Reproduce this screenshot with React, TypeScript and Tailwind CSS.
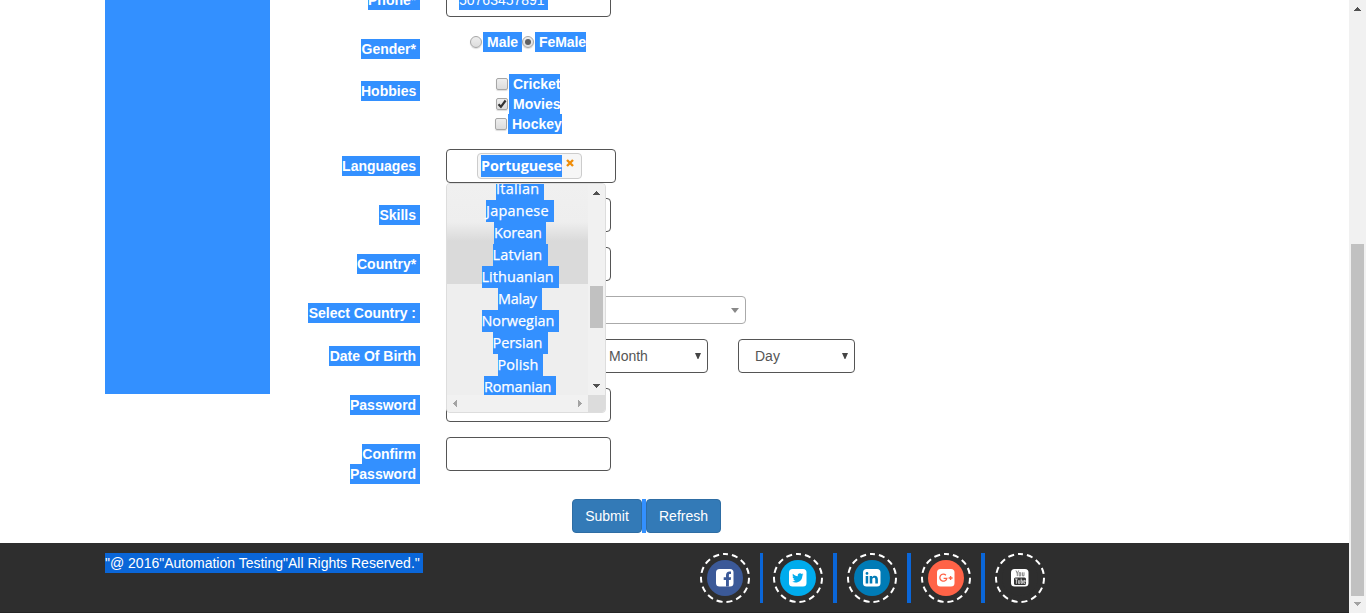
import React from "react";

const sel = "bg-[#3390ff] text-white";

function Row({ label, w, h, children }: { label: string; w: string; h: string; children?: React.ReactNode }) {
  return (
    <div className={`flex shrink-0 items-start ${h}`}>
      <div className="mr-[26px] flex w-[150px] justify-end pt-[7px]">
        <div className={`pr-1 text-right font-bold ${sel} ${w} whitespace-nowrap`}>{label}</div>
      </div>
      {children}
    </div>
  );
}

function Field({ className = "w-[165px]", children }: { className?: string; children?: React.ReactNode }) {
  return <div className={`h-[34px] shrink-0 rounded-[4px] border border-[#555] bg-white ${className}`}>{children}</div>;
}

function Radio({ on = false }: { on?: boolean }) {
  return (
    <span className="mt-1 flex h-3 w-3 shrink-0 items-center justify-center rounded-full border border-[#a6a6a6] bg-gradient-to-b from-[#eee] to-[#dcdcdc] shadow-[0_1px_1px_#ddd]">
      {on && <span className="h-[6px] w-[6px] rounded-full bg-[#606060]" />}
    </span>
  );
}

function Check({ on = false }: { on?: boolean }) {
  return (
    <span className="flex h-3 w-3 shrink-0 items-center justify-center rounded-[2px] border border-[#a6a6a6] bg-gradient-to-b from-[#eee] to-[#dcdcdc] shadow-[0_1px_1px_#ddd]">
      {on && (
        <svg width="10" height="10" viewBox="0 0 10 10">
          <path d="M1.5 5.3 3.9 7.8 8.6 1.5" fill="none" stroke="#333" strokeWidth="2.2" />
        </svg>
      )}
    </span>
  );
}

const languages = [
  ["Italian", "w-[48px]", "tracking-[0.3px]"],
  ["Japanese", "w-[68px]", "tracking-[0.3px]"],
  ["Korean", "w-[52px]", "tracking-[-0.1px]"],
  ["Latvian", "w-[55px]", "tracking-[0.2px]"],
  ["Lithuanian", "w-[77px]", "tracking-[0.1px]"],
  ["Malay", "w-[44px]", "tracking-[-0.2px]"],
  ["Norwegian", "w-[77px]", "tracking-[0px]"],
  ["Persian", "w-[55px]", "tracking-[0px]"],
  ["Polish", "w-[45px]", "tracking-[0.1px]"],
  ["Romanian", "w-[72px]", "tracking-[-0.1px]"],
];

function Dropdown() {
  return (
    <div className="absolute left-0 top-[34px] z-10 flex h-[230px] w-[160px] flex-col overflow-hidden rounded-[4px] border border-[#ddd] bg-[#eee]">
      <div className="flex h-[211px]">
        <div className="h-[211px] w-[141px] overflow-hidden bg-[linear-gradient(#f0f0f0_0px,#eee_38px,#dadada_57px,#dadada_100px,#eee_100px)]">
          <div className="-mt-[6px] flex flex-col items-center pl-[5px]">
            {languages.map(([name, w, tracking]) => (
              <div
                key={name}
                className={`h-[22px] shrink-0 whitespace-nowrap font-['Open_Sans','Noto_Sans',sans-serif] text-[14.4px] font-medium leading-[22px] [-webkit-text-stroke:0.25px_white] ${sel} ${w} ${tracking}`}
              >
                {name}
              </div>
            ))}
          </div>
        </div>
        <div className="flex w-[17px] flex-col items-center bg-[#f1f1f1]">
          <svg className="mt-[7px]" width="7" height="4" shapeRendering="crispEdges">
            <path d="M0 4 3.5 0 7 4z" fill="#505050" />
          </svg>
          <div className="mt-[91px] h-[42px] w-[13px] bg-[#c1c1c1]" />
          <svg className="mt-[56px]" width="7" height="4" shapeRendering="crispEdges">
            <path d="M0 0 3.5 4 7 0z" fill="#505050" />
          </svg>
        </div>
      </div>
      <div className="flex h-[17px] items-center bg-[#f1f1f1]">
        <svg className="ml-[6px]" width="4" height="7" shapeRendering="crispEdges">
          <path d="M4 0 0 3.5 4 7z" fill="#a3a3a3" />
        </svg>
        <svg className="ml-[121px]" width="4" height="7" shapeRendering="crispEdges">
          <path d="M0 0 4 3.5 0 7z" fill="#a3a3a3" />
        </svg>
        <div className="ml-auto h-[17px] w-[17px] bg-[#dcdcdc]" />
      </div>
    </div>
  );
}

function Caret() {
  return (
    <svg width="6" height="6" viewBox="0 0 6 6">
      <path d="M0 0h6L3.4 6h-.8z" fill="#444" />
    </svg>
  );
}

function Social({ bg, children }: { bg: string; children: React.ReactNode }) {
  return (
    <svg width="50" height="50" viewBox="0 0 50 50" className="shrink-0">
      <circle cx="25" cy="25" r="24" fill="none" stroke="#fff" strokeWidth="2" strokeDasharray="6.05 4.003" strokeDashoffset="3" transform="rotate(-90 25 25)" />
      <circle cx="25" cy="25" r="18" fill={bg} />
      {children}
    </svg>
  );
}

const Bar = ({ className }: { className: string }) => <div className={`h-[50px] shrink-0 bg-[#0a66d8] ${className}`} />;

const Plate = () => <rect x="16" y="16" width="17.5" height="17.5" rx="3.5" fill="#fff" />;

function Footer() {
  return (
    <footer className="flex h-[70px] shrink-0 items-start border-b border-[#242424] bg-[#2e2e2e] pl-[105px] pt-[10px]">
      <div className="h-5 w-[318px] whitespace-nowrap bg-[#0a66d8] text-white">"@ 2016"Automation Testing"All Rights Reserved."</div>
      <div className="ml-[277px] flex">
        <Social bg="#3b5998">
          <Plate />
          <path d="M26 33.5v-6.5h-2.3v-2.8H26v-2c0-2.5 1.4-3.8 3.6-3.8h1.4v2.7h-.9c-1.1 0-1.2.5-1.2 1.4v1.7h2.2l-.4 2.8h-1.8v6.5z" fill="#3b5998" />
        </Social>
        <Bar className="ml-[10px] mr-[10px] w-[3px]" />
        <Social bg="#00aced">
          <Plate />
          <g transform="translate(25 25) scale(.86) translate(-25.2 -25)">
            <path d="M31.6 20.8c-.5.2-1 .4-1.5.4.5-.3.9-.8 1.1-1.4-.5.3-1.1.5-1.7.6a2.7 2.7 0 0 0-4.6 2.5c-2.2-.1-4.2-1.2-5.6-2.8-.7 1.3-.3 2.8.9 3.6-.5 0-.9-.1-1.3-.3 0 1.3.9 2.4 2.2 2.7-.4.1-.8.1-1.2 0 .3 1.1 1.3 1.9 2.5 1.9a5.5 5.5 0 0 1-4 1.1c4.9 3.1 12-.2 11.9-7 .5-.3 1-.8 1.3-1.3z" fill="#00aced" />
          </g>
        </Social>
        <Bar className="ml-[10px] mr-[10px] w-[4px]" />
        <Social bg="#007bb6">
          <Plate />
          <path d="M18.7 23h2.5v7.6h-2.5zM18.6 20.4a1.4 1.3 0 1 0 2.8 0 1.4 1.3 0 1 0-2.8 0M22.7 23h2.4v1.2c.4-.7 1.3-1.4 2.6-1.4 2.2 0 3.2 1.5 3.2 3.7v4.1h-2.6v-3.9c0-1.3-.4-1.9-1.3-1.9-1.1 0-1.7.8-1.7 1.9v3.9h-2.6z" fill="#007bb6" />
        </Social>
        <Bar className="ml-[10px] mr-[10px] w-[4px]" />
        <Social bg="#ff6347">
          <Plate />
          <path d="M24.9 22.3a3.5 3.5 0 1 0 .9 3h-3.2M27.6 25h4M29.6 23v4" fill="none" stroke="#ff6347" strokeWidth="1.3" />
        </Social>
        <Bar className="ml-[10px] mr-[10px] w-[4px]" />
        <Social bg="#2e2e2e">
          <Plate />
          <path d="m21 17.5 1.3 3.1v2.5m1.4-5.6-1.4 3.1M24.2 19.7h1.5v3.2h-1.5zM27.4 19.3v3.5h1.6v-3.5" fill="none" stroke="#777" strokeWidth=".9" />
          <rect x="19" y="24.5" width="12" height="7.5" rx="1.5" fill="#343434" />
          <path d="M20 26h2.7m-1.3 0v4.8M23.4 27.2v3.2h1.4v-3.2m1.4-1.7v4.9h1.2v-2.7h-1.2m4.1 2.7h-1.5v-3h1.4v1.5h-1.4" fill="none" stroke="#eee" strokeWidth=".8" />
        </Social>
      </div>
    </footer>
  );
}

export default function App() {
  return (
    <div className="flex h-[613px] w-[1366px] overflow-hidden bg-white font-['Liberation_Sans',Arial,sans-serif] text-[14px] leading-[20px]">
      <div className="flex w-[1349px] flex-col">
        <div className="flex h-[543px]">
          <aside className="ml-[105px] h-[394px] w-[165px] bg-[#3390ff]" />
          <main className="-mt-[17px] flex w-[650px] flex-col">
            <Row label="Phone*" w="w-[52px]" h="h-[49px]">
              <Field>
                <div className={`ml-3 mt-[6px] w-[89px] ${sel}`}>50763457891</div>
              </Field>
            </Row>
            <Row label="Gender*" w="w-[59px]" h="h-[42px]">
              <div className="ml-[24px] flex font-bold">
                <Radio />
                <span className={`ml-px w-[39px] pl-1 ${sel}`}>Male</span>
                <Radio on />
                <span className={`ml-px w-[51px] whitespace-nowrap pl-1 tracking-[-0.1px] ${sel}`}>FeMale</span>
              </div>
            </Row>
            <Row label="Hobbies" w="w-[59px]" h="h-[75px]">
              <div className="ml-[49px] flex flex-col font-bold">
                <div className="flex items-center gap-px pl-px">
                  <Check />
                  <span className={`w-[51px] pl-1 ${sel}`}>Cricket</span>
                </div>
                <div className="flex items-center gap-px pl-px">
                  <Check on />
                  <span className={`w-[51px] pl-1 ${sel}`}>Movies</span>
                </div>
                <div className="flex items-center gap-px">
                  <Check />
                  <span className={`w-[54px] pl-1 ${sel}`}>Hockey</span>
                </div>
              </div>
            </Row>
            <Row label="Languages" w="w-[78px]" h="h-[49px]">
              <div className="relative">
                <Field className="w-[170px]">
                  <div className="ml-[30px] mt-[3px] flex h-[26px] w-[105px] items-start rounded-[4px] border border-[#ccc] bg-[#f6f6f6] pl-[3px] pt-px">
                    <span className={`h-[22px] w-[81px] whitespace-nowrap font-['Open_Sans','Noto_Sans',sans-serif] text-[14.4px] font-bold leading-[22px] tracking-[-0.1px] ${sel}`}>
                      Portuguese
                    </span>
                    <svg className="ml-[4px] mt-[4px]" width="8" height="8" viewBox="0 0 8 8">
                      <path d="m1 1 6 6M7 1 1 7" stroke="#ef8c08" strokeWidth="2.4" />
                    </svg>
                  </div>
                </Field>
                <Dropdown />
              </div>
            </Row>
            <Row label="Skills" w="w-[41px]" h="h-[49px]">
              <Field />
            </Row>
            <Row label="Country*" w="w-[63px]" h="h-[49px]">
              <Field />
            </Row>
            <Row label="Select Country :" w="w-[112px]" h="h-[43px]">
              <div className="flex h-7 w-[300px] items-center justify-end rounded-[4px] border border-[#aaa] pr-[6px]">
                <svg width="8" height="5" viewBox="0 0 8 5">
                  <path d="M0 0h8L4 5z" fill="#888" />
                </svg>
              </div>
            </Row>
            <Row label="Date Of Birth" w="w-[91px]" h="h-[49px]">
              <Field className="w-[117px]" />
              <Field className="ml-[28px] flex w-[117px] items-center justify-between pl-[17px] pr-[6px] text-[#555]">
                Month
                <Caret />
              </Field>
              <Field className="ml-[30px] flex w-[117px] items-center justify-between pl-4 pr-[6px] text-[#555]">
                Day
                <Caret />
              </Field>
            </Row>
            <Row label="Password" w="w-[70px]" h="h-[49px]">
              <Field />
            </Row>
            <div className="flex h-[62px] shrink-0 items-start">
              <div className="mr-[26px] flex w-[150px] flex-col items-end pt-[7px] font-bold">
                <span className={`w-[58px] pr-1 text-right ${sel}`}>Confirm</span>
                <span className={`w-[70px] pr-1 text-right ${sel}`}>Password</span>
              </div>
              <Field />
            </div>
            <div className="ml-[302px] flex h-[34px] shrink-0 text-white">
              <button className="w-[70px] rounded-[4px] border border-[#2e6da4] bg-[#337ab7]">Submit</button>
              <span className="w-1 bg-[#3390ff]" />
              <button className="w-[75px] rounded-[4px] border border-[#2e6da4] bg-[#337ab7]">Refresh</button>
            </div>
          </main>
        </div>
        <Footer />
      </div>
      <div className="flex w-[17px] flex-col items-center bg-[#f1f1f1]">
        <svg className="mt-[7px] shrink-0" width="7" height="4" shapeRendering="crispEdges">
          <path d="M0 4 3.5 0 7 4z" fill="#505050" />
        </svg>
        <div className="mt-[233px] h-[352px] w-[13px] shrink-0 bg-[#c1c1c1]" />
        <svg className="mt-[6px] shrink-0" width="7" height="4" shapeRendering="crispEdges">
          <path d="M0 0 3.5 4 7 0z" fill="#a3a3a3" />
        </svg>
      </div>
    </div>
  );
}
